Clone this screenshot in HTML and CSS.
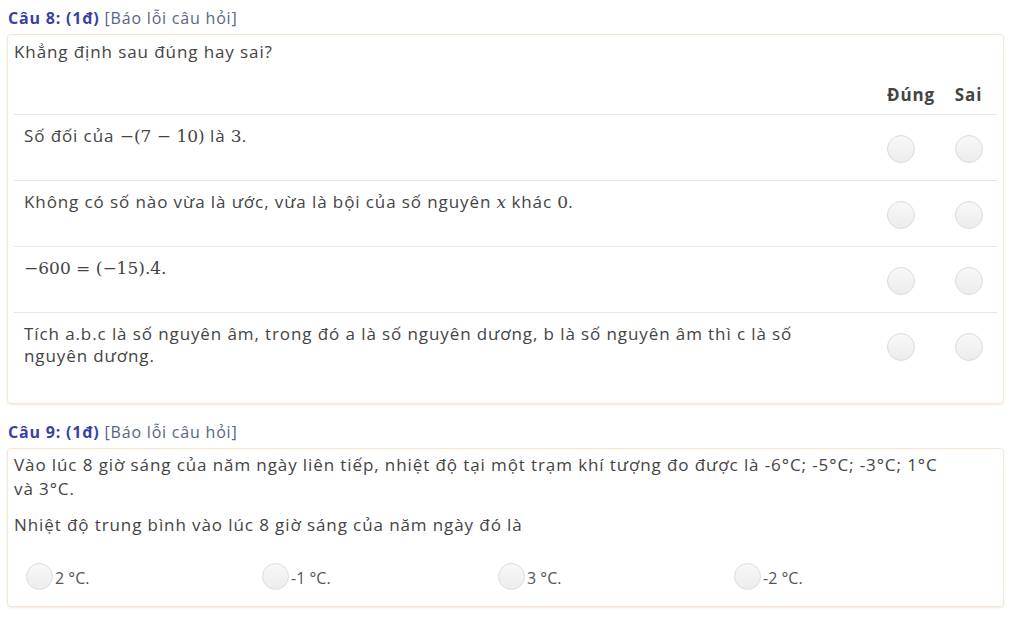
FILE: index.html
```html
<!DOCTYPE html>
<html lang="vi">
<head>
  <meta charset="UTF-8">
  <title>Câu hỏi</title>
  <link rel="stylesheet" href="styles.css">
</head>
<body>
  <div class="question">
    <div class="q-title"><b>Câu 8: (1đ)</b> <span class="report">[Báo lỗi câu hỏi]</span></div>
    <div class="q-box">
      <p class="q-text">Khẳng định sau đúng hay sai?</p>
      <table class="tf">
        <thead>
          <tr><th></th><th class="col col-t">Đúng</th><th class="col col-f">Sai</th></tr>
        </thead>
        <tbody>
          <tr>
            <td class="stmt">Số đối của <span class="m">−(7 − 10)</span> là <span class="m">3</span>.</td>
            <td class="col col-t"><span class="radio"></span></td>
            <td class="col col-f"><span class="radio"></span></td>
          </tr>
          <tr>
            <td class="stmt">Không có số nào vừa là ước, vừa là bội của số nguyên <span class="m"><i>x</i></span> khác <span class="m">0</span>.</td>
            <td class="col col-t"><span class="radio"></span></td>
            <td class="col col-f"><span class="radio"></span></td>
          </tr>
          <tr>
            <td class="stmt"><span class="m">−600 = (−15).4.</span></td>
            <td class="col col-t"><span class="radio"></span></td>
            <td class="col col-f"><span class="radio"></span></td>
          </tr>
          <tr>
            <td class="stmt">Tích a.b.c là số nguyên âm, trong đó a là số nguyên dương, b là số nguyên âm thì c là số nguyên dương.</td>
            <td class="col col-t"><span class="radio"></span></td>
            <td class="col col-f"><span class="radio"></span></td>
          </tr>
        </tbody>
      </table>
    </div>
  </div>

  <div class="question">
    <div class="q-title"><b>Câu 9: (1đ)</b> <span class="report">[Báo lỗi câu hỏi]</span></div>
    <div class="q-box q-box-mc">
      <p class="q-text">Vào lúc 8 giờ sáng của năm ngày liên tiếp, nhiệt độ tại một trạm khí tượng đo được là -6°C; -5°C; -3°C; 1°C và&nbsp;3°C.</p>
      <p class="q-text">Nhiệt độ trung bình vào lúc 8 giờ sáng của năm ngày đó là</p>
      <div class="options">
        <label class="opt"><span class="radio"></span>2 °C.</label>
        <label class="opt"><span class="radio"></span>-1 °C.</label>
        <label class="opt"><span class="radio"></span>3 °C.</label>
        <label class="opt"><span class="radio"></span>-2 °C.</label>
      </div>
    </div>
  </div>
</body>
</html>
```

FILE: styles.css
```css
body {
  margin: 0;
  padding: 6px 20px 0 7px;
  font-family: "Open Sans", sans-serif;
  font-size: 17px;
  letter-spacing: 0.9px;
  color: #444;
  background: #fff;
}

.question {
  margin-bottom: 16px;
}

.q-title {
  padding-left: 1px;
  line-height: 24px;
  font-size: 16px;
  letter-spacing: 0.8px;
  color: #5a6484;
}

.q-title b {
  color: #3b40a8;
}

.q-box {
  margin-top: 4px;
  border: 1px solid #f4e6cf;
  border-radius: 4px;
  box-shadow: 0 1px 2px rgba(200, 180, 140, 0.25);
  padding: 5px 6px 24px 6px;
}

.q-text {
  margin: 0;
  line-height: 24px;
}

.tf {
  width: 100%;
  border-collapse: collapse;
  margin-top: 19px;
}

.tf th {
  font-weight: bold;
  height: 22px;
  vertical-align: top;
  padding: 0 0 8px;
  border-bottom: 1px solid #e6e6e6;
}

.tf tbody tr {
  height: 66px;
}

.tf td {
  padding: 0;
  border-bottom: 1px solid #e6e6e6;
}

.tf tbody tr:last-child td {
  border-bottom: none;
}

.stmt {
  vertical-align: top;
  padding: 10px 50px 0 10px !important;
  line-height: 22px;
}

.tf .col {
  text-align: center;
  vertical-align: middle;
}

.tf .col-t {
  width: 58px;
}

.tf .col-f {
  width: 57px;
}

.tf th.col-t {
  padding-left: 10px;
}

.tf td.col-t {
  padding-right: 10px;
}

.tf td.col {
  padding-top: 2px;
}

.m {
  font-family: "DejaVu Serif", "Liberation Serif", serif;
  font-size: 17px;
  letter-spacing: 0;
}

.radio {
  display: inline-block;
  width: 28px;
  height: 28px;
  border-radius: 50%;
  border: 1px solid #dcdcdc;
  background: linear-gradient(#f8f8f8, #ececec);
  box-sizing: border-box;
  vertical-align: middle;
}

.q-box-mc {
  padding: 4px 6px 16px 6px;
}

.q-box-mc .q-text + .q-text {
  margin-top: 12px;
}

.options {
  display: grid;
  grid-template-columns: repeat(4, 236px);
  margin-top: 30px;
  padding-left: 12px;
}

.opt {
  display: flex;
  align-items: center;
  gap: 2px;
  font-size: 16px;
  letter-spacing: 0;
  color: #555;
}

.opt .radio {
  width: 27px;
  height: 27px;
  margin-top: -4px;
}
```
